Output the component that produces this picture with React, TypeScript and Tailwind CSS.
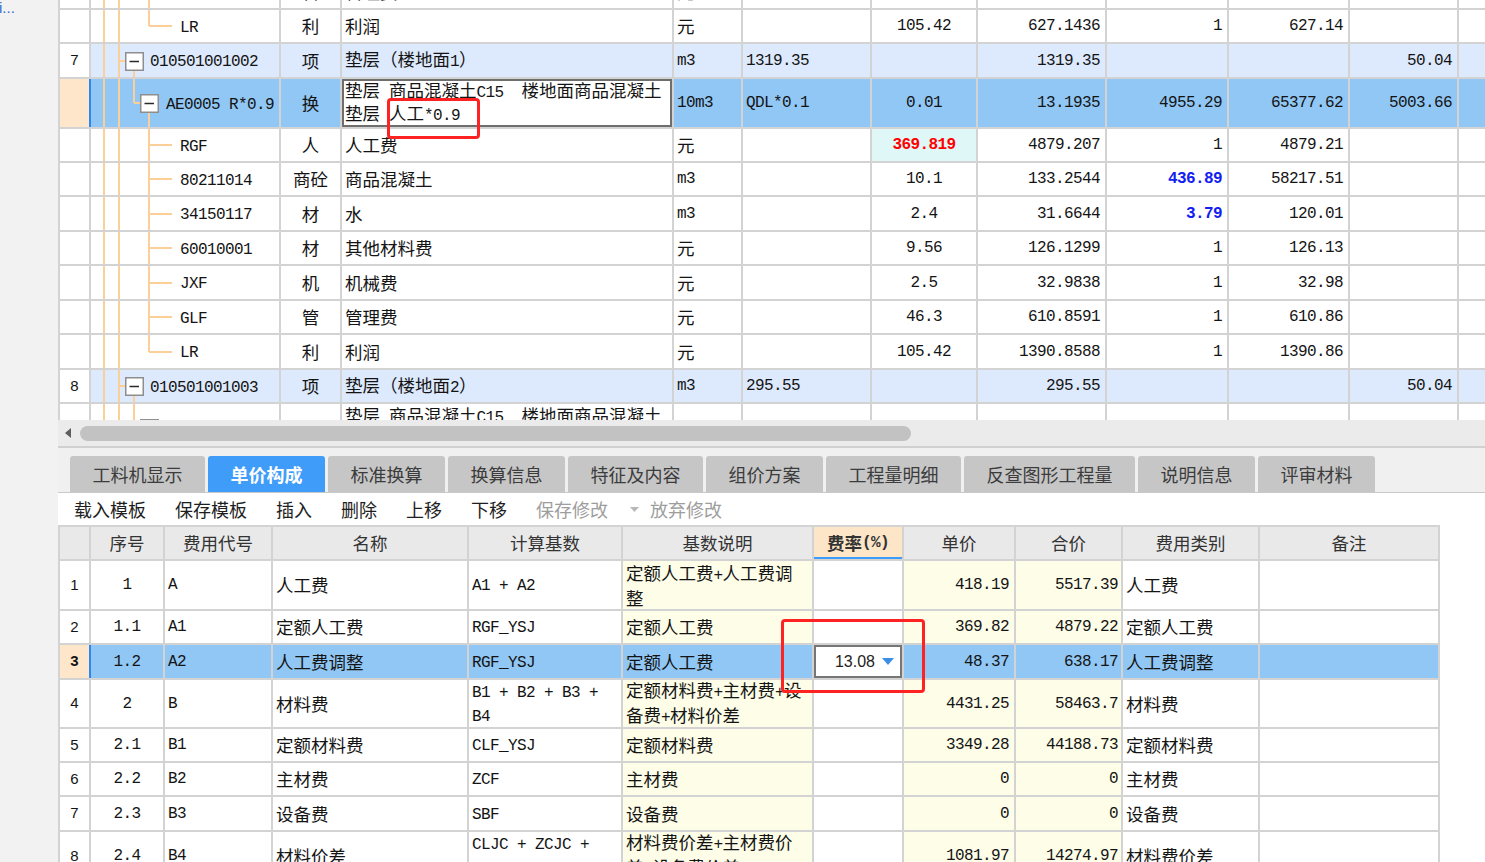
import React from "react";

const MONO = "font-['Liberation_Mono',monospace] text-[16px] tracking-[-0.6px]";
const CJKF = "font-['Noto_Sans_CJK_SC',sans-serif] text-[17.5px]";

function Mx({ s }: { s: string }) {
  const parts = s.match(/[\x00-\x7F]+|[^\x00-\x7F]+/g) ?? [];
  return (
    <>
      {parts.map((p, i) =>
        /^[\x00-\x7F]/.test(p) ? (
          <span key={i} className={MONO}>
            {p}
          </span>
        ) : (
          <span key={i} className={CJKF}>
            {p}
          </span>
        )
      )}
    </>
  );
}

function Lines({ lines }: { lines: string[] }) {
  return (
    <div>
      {lines.map((l, i) => (
        <div key={i}>
          <Mx s={l} />
        </div>
      ))}
    </div>
  );
}

type TreeKind = "leaf" | "leafLast" | "l1" | "l2";

const LINE = "#fcce98";

function Tree({ kind, h }: { kind: TreeKind; h: number }) {
  const m = Math.round(h / 2);
  return (
    <svg className="absolute left-0 top-0" width={90} height={h}>
      <g shapeRendering="crispEdges" stroke={LINE} strokeWidth={2}>
        <line x1={13} y1={0} x2={13} y2={h} />
        <line x1={28} y1={0} x2={28} y2={h} />
        {kind === "leaf" && (
          <>
            <line x1={58} y1={0} x2={58} y2={h} />
            <line x1={58} y1={m} x2={81} y2={m} />
          </>
        )}
        {kind === "leafLast" && (
          <>
            <line x1={58} y1={0} x2={58} y2={m} />
            <line x1={58} y1={m} x2={81} y2={m} />
          </>
        )}
        {kind === "l1" && (
          <>
            <line x1={28} y1={m} x2={34} y2={m} />
            <line x1={43} y1={m + 9} x2={43} y2={h} />
          </>
        )}
        {kind === "l2" && (
          <>
            <line x1={43} y1={0} x2={43} y2={m} />
            <line x1={43} y1={m} x2={49} y2={m} />
            <line x1={58} y1={m + 9} x2={58} y2={h} />
          </>
        )}
      </g>
      {kind === "l1" && (
        <>
          <rect x={34.75} y={m - 8.25} width={17.5} height={17.5} fill="#fff" stroke="#8e8e8e" strokeWidth={1.5} />
          <line x1={38.5} y1={m + 0.5} x2={48} y2={m + 0.5} stroke="#2a2a2a" strokeWidth={1.5} />
        </>
      )}
      {kind === "l2" && (
        <>
          <rect x={49.75} y={m - 8.25} width={17.5} height={17.5} fill="#fff" stroke="#8e8e8e" strokeWidth={1.5} />
          <line x1={53.5} y1={m + 0.5} x2={63} y2={m + 0.5} stroke="#2a2a2a" strokeWidth={1.5} />
        </>
      )}
    </svg>
  );
}

const padMap: Record<TreeKind, string> = {
  leaf: "pl-[89px]",
  leafLast: "pl-[89px]",
  l1: "pl-[59px]",
  l2: "pl-[75px]",
};

type TopRow = {
  hc: string;
  h: number;
  kind: TreeKind;
  bg?: "hdr" | "sel";
  num?: string;
  code: string;
  type: string;
  name: string[];
  unit: string;
  expr: string;
  qty: string;
  c8: string;
  c9: string;
  c10: string;
  c11: string;
  qtyRed?: boolean;
  c9Blue?: boolean;
  edit?: boolean;
  extra?: string;
};

const topRows: TopRow[] = [
  { hc: "h-[34px]", h: 34, extra: "-mt-[24px]", kind: "leaf", code: "GLF", type: "管", name: ["管理费"], unit: "元", expr: "", qty: "46.3", c8: "287.4432", c9: "1", c10: "287.44", c11: "" },
  { hc: "h-[34px]", h: 34, kind: "leafLast", code: "LR", type: "利", name: ["利润"], unit: "元", expr: "", qty: "105.42", c8: "627.1436", c9: "1", c10: "627.14", c11: "" },
  { hc: "h-[35px]", h: 35, kind: "l1", bg: "hdr", num: "7", code: "010501001002", type: "项", name: ["垫层（楼地面1）"], unit: "m3", expr: "1319.35", qty: "", c8: "1319.35", c9: "", c10: "", c11: "50.04" },
  { hc: "h-[50px]", h: 50, kind: "l2", bg: "sel", code: "AE0005 R*0.9", type: "换", name: ["垫层 商品混凝土C15  楼地面商品混凝土", "垫层 人工*0.9"], unit: "10m3", expr: "QDL*0.1", qty: "0.01", c8: "13.1935", c9: "4955.29", c10: "65377.62", c11: "5003.66", edit: true },
  { hc: "h-[34px]", h: 34, kind: "leaf", code: "RGF", type: "人", name: ["人工费"], unit: "元", expr: "", qty: "369.819", qtyRed: true, c8: "4879.207", c9: "1", c10: "4879.21", c11: "" },
  { hc: "h-[34px]", h: 34, kind: "leaf", code: "80211014", type: "商砼", name: ["商品混凝土"], unit: "m3", expr: "", qty: "10.1", c8: "133.2544", c9: "436.89", c9Blue: true, c10: "58217.51", c11: "" },
  { hc: "h-[35px]", h: 35, kind: "leaf", code: "34150117", type: "材", name: ["水"], unit: "m3", expr: "", qty: "2.4", c8: "31.6644", c9: "3.79", c9Blue: true, c10: "120.01", c11: "" },
  { hc: "h-[34px]", h: 34, kind: "leaf", code: "60010001", type: "材", name: ["其他材料费"], unit: "元", expr: "", qty: "9.56", c8: "126.1299", c9: "1", c10: "126.13", c11: "" },
  { hc: "h-[35px]", h: 35, kind: "leaf", code: "JXF", type: "机", name: ["机械费"], unit: "元", expr: "", qty: "2.5", c8: "32.9838", c9: "1", c10: "32.98", c11: "" },
  { hc: "h-[34px]", h: 34, kind: "leaf", code: "GLF", type: "管", name: ["管理费"], unit: "元", expr: "", qty: "46.3", c8: "610.8591", c9: "1", c10: "610.86", c11: "" },
  { hc: "h-[35px]", h: 35, kind: "leafLast", code: "LR", type: "利", name: ["利润"], unit: "元", expr: "", qty: "105.42", c8: "1390.8588", c9: "1", c10: "1390.86", c11: "" },
  { hc: "h-[34px]", h: 34, kind: "l1", bg: "hdr", num: "8", code: "010501001003", type: "项", name: ["垫层（楼地面2）"], unit: "m3", expr: "295.55", qty: "", c8: "295.55", c9: "", c10: "", c11: "50.04" },
  { hc: "h-[50px]", h: 50, kind: "l2", code: "AE0005 R*0.9", type: "换", name: ["垫层 商品混凝土C15  楼地面商品混凝土", "垫层 人工*0.9"], unit: "10m3", expr: "QDL*0.1", qty: "0.01", c8: "3.0", c9: "4955.29", c10: "14865.87", c11: "" },
];

const CELL = "shrink-0 border-r-2 border-[#d3d3d3] flex items-center whitespace-pre leading-[20px] overflow-hidden";

function TopGridRow({ r }: { r: TopRow }) {
  const sel = r.bg === "sel";
  const rowBg = sel ? "bg-[#91c7f5]" : r.bg === "hdr" ? "bg-[#dde9fc]" : "bg-white";
  return (
    <div className={`flex border-b-2 border-[#d3d3d3] ${r.hc} ${r.extra ?? ""} ${rowBg}`}>
      <div
        className={`flex w-[31px] shrink-0 items-center justify-center border-r-2 font-['Liberation_Sans',sans-serif] text-[15px] ${
          sel ? "border-[#2f86ee] bg-[#fde6c9]" : "border-[#d3d3d3] bg-white"
        }`}
      >
        {r.num}
      </div>
      <div className={`${CELL} relative w-[190px] ${padMap[r.kind]}`}>
        <Tree kind={r.kind} h={r.h - 2} />
        <span className="relative">
          <Mx s={r.code} />
        </span>
      </div>
      <div className={`${CELL} w-[61px] justify-center`}>
        <Mx s={r.type} />
      </div>
      <div className={`${CELL} w-[332px] pl-[3px] ${r.edit ? "bg-white shadow-[inset_0_0_0_2px_#6e6e6e]" : ""}`}>
        <Lines lines={r.name} />
      </div>
      <div className={`${CELL} w-[69px] pl-[3px]`}>
        <Mx s={r.unit} />
      </div>
      <div className={`${CELL} w-[129px] pl-[3px]`}>
        <Mx s={r.expr} />
      </div>
      <div className={`${CELL} w-[106px] justify-center ${r.qtyRed ? "bg-[#dff7f7]" : ""}`}>
        {r.qtyRed ? (
          <span className={`${MONO} font-bold text-[#ff0000]`}>{r.qty}</span>
        ) : (
          <Mx s={r.qty} />
        )}
      </div>
      <div className={`${CELL} w-[129px] justify-end pr-[5px]`}>
        <Mx s={r.c8} />
      </div>
      <div className={`${CELL} w-[122px] justify-end pr-[5px]`}>
        {r.c9Blue ? <span className={`${MONO} font-bold text-[#1220f2]`}>{r.c9}</span> : <Mx s={r.c9} />}
      </div>
      <div className={`${CELL} w-[121px] justify-end pr-[5px]`}>
        <Mx s={r.c10} />
      </div>
      <div className={`${CELL} w-[109px] justify-end pr-[5px]`}>
        <Mx s={r.c11} />
      </div>
      <div className="flex-1" />
    </div>
  );
}

const tabs: { label: string; w: string; active?: boolean }[] = [
  { label: "工料机显示", w: "w-[135px]" },
  { label: "单价构成", w: "w-[117px]", active: true },
  { label: "标准换算", w: "w-[117px]" },
  { label: "换算信息", w: "w-[117px]" },
  { label: "特征及内容", w: "w-[135px]" },
  { label: "组价方案", w: "w-[117px]" },
  { label: "工程量明细", w: "w-[135px]" },
  { label: "反查图形工程量", w: "w-[171px]" },
  { label: "说明信息", w: "w-[117px]" },
  { label: "评审材料", w: "w-[117px]" },
];

type BRow = {
  hc: string;
  n: string;
  seq: string;
  code: string;
  name: string;
  base: string[];
  desc: string[];
  price: string;
  total: string;
  cat: string;
  sel?: boolean;
};

const bRows: BRow[] = [
  { hc: "h-[50px]", n: "1", seq: "1", code: "A", name: "人工费", base: ["A1 + A2"], desc: ["定额人工费+人工费调", "整"], price: "418.19", total: "5517.39", cat: "人工费" },
  { hc: "h-[34px]", n: "2", seq: "1.1", code: "A1", name: "定额人工费", base: ["RGF_YSJ"], desc: ["定额人工费"], price: "369.82", total: "4879.22", cat: "定额人工费" },
  { hc: "h-[35px]", n: "3", seq: "1.2", code: "A2", name: "人工费调整", base: ["RGF_YSJ"], desc: ["定额人工费"], price: "48.37", total: "638.17", cat: "人工费调整", sel: true },
  { hc: "h-[49px]", n: "4", seq: "2", code: "B", name: "材料费", base: ["B1 + B2 + B3 +", "B4"], desc: ["定额材料费+主材费+设", "备费+材料价差"], price: "4431.25", total: "58463.7", cat: "材料费" },
  { hc: "h-[34px]", n: "5", seq: "2.1", code: "B1", name: "定额材料费", base: ["CLF_YSJ"], desc: ["定额材料费"], price: "3349.28", total: "44188.73", cat: "定额材料费" },
  { hc: "h-[34px]", n: "6", seq: "2.2", code: "B2", name: "主材费", base: ["ZCF"], desc: ["主材费"], price: "0", total: "0", cat: "主材费" },
  { hc: "h-[35px]", n: "7", seq: "2.3", code: "B3", name: "设备费", base: ["SBF"], desc: ["设备费"], price: "0", total: "0", cat: "设备费" },
  { hc: "h-[50px]", n: "8", seq: "2.4", code: "B4", name: "材料价差", base: ["CLJC + ZCJC +", "SBJC"], desc: ["材料费价差+主材费价", "差+设备费价差"], price: "1081.97", total: "14274.97", cat: "材料费价差" },
];

function BottomRow({ r }: { r: BRow }) {
  const sel = !!r.sel;
  const yel = sel ? "" : "bg-[#fdfde8]";
  return (
    <div className={`flex border-b-2 border-[#d3d3d3] ${r.hc} ${sel ? "bg-[#91c7f5]" : "bg-white"}`}>
      <div
        className={`flex w-[31px] shrink-0 items-center justify-center border-r-2 font-['Liberation_Sans',sans-serif] text-[15px] ${
          sel ? "border-[#2f86ee] bg-[#fde6c9] font-bold" : "border-[#d3d3d3] bg-white"
        }`}
      >
        {r.n}
      </div>
      <div className={`${CELL} w-[74px] justify-center`}>
        <Mx s={r.seq} />
      </div>
      <div className={`${CELL} w-[108px] pl-[3px]`}>
        <Mx s={r.code} />
      </div>
      <div className={`${CELL} w-[196px] pl-[3px]`}>
        <Mx s={r.name} />
      </div>
      <div className={`${CELL} w-[154px] pl-[3px] leading-[21px]`}>
        <Lines lines={r.base} />
      </div>
      <div className={`${CELL} w-[191px] pl-[3px] leading-[21px] ${yel}`}>
        <Lines lines={r.desc} />
      </div>
      <div className={`${CELL} w-[90px]`}>
        {sel && (
          <div className="flex h-full w-full items-center justify-end gap-[7px] bg-white pr-[8px] shadow-[inset_0_0_0_2px_#767676]">
            <span className="font-['Liberation_Sans',sans-serif] text-[16px] text-[#222]">13.08</span>
            <svg width="12" height="7" viewBox="0 0 12 7">
              <path d="M0 0H12L6 7Z" fill="#3a8ee6" />
            </svg>
          </div>
        )}
      </div>
      <div className={`${CELL} w-[112px] justify-end pr-[5px] ${yel}`}>
        <Mx s={r.price} />
      </div>
      <div className={`${CELL} w-[107px] justify-end pr-[3px] ${yel}`}>
        <Mx s={r.total} />
      </div>
      <div className={`${CELL} w-[137px] pl-[3px]`}>
        <Mx s={r.cat} />
      </div>
      <div className={`${CELL} w-[180px]`} />
    </div>
  );
}

const headers: { label: string; w: string; hl?: boolean }[] = [
  { label: "序号", w: "w-[74px]" },
  { label: "费用代号", w: "w-[108px]" },
  { label: "名称", w: "w-[196px]" },
  { label: "计算基数", w: "w-[154px]" },
  { label: "基数说明", w: "w-[191px]" },
  { label: "费率(%)", w: "w-[90px]", hl: true },
  { label: "单价", w: "w-[112px]" },
  { label: "合价", w: "w-[107px]" },
  { label: "费用类别", w: "w-[137px]" },
  { label: "备注", w: "w-[180px]" },
];

export default function App() {
  return (
    <div className="relative flex h-[862px] w-[1485px] overflow-hidden bg-[#f2f2f2] font-['Noto_Sans_CJK_SC',sans-serif] text-[#141414]">
      <aside className="w-[58px] shrink-0 overflow-hidden bg-[#f2f2f2]">
        <div className="-ml-[1px] font-['Liberation_Sans',sans-serif] text-[15px] leading-none text-[#2f6fd0]">i...</div>
      </aside>
      <main className="flex min-w-0 flex-1 flex-col">
        {/* top grid */}
        <div className="h-[420px] shrink-0 overflow-hidden border-l-2 border-[#d3d3d3] bg-white">
          {topRows.map((r, i) => (
            <TopGridRow key={i} r={r} />
          ))}
        </div>

        {/* horizontal scrollbar */}
        <div className="flex h-[28px] shrink-0 items-center border-b-2 border-[#d0d0d0] bg-[#ebebeb]">
          <svg className="ml-[6px]" width="8" height="10" viewBox="0 0 8 10">
            <path d="M7 0L1 5L7 10Z" fill="#5e5e5e" />
          </svg>
          <div className="ml-[8px] h-[15px] w-[831px] rounded-full bg-[#c2c2c2]" />
        </div>

        {/* tabs */}
        <div className="flex h-[45px] shrink-0 gap-[3px] border-b border-[#c9c9c9] bg-[#f0f0f0] pl-[12px] pt-[8px]">
          {tabs.map((t) => (
            <div
              key={t.label}
              className={`${t.w} flex h-[36px] items-center justify-center rounded-t-[3px] text-[18px] ${
                t.active ? "bg-[#3f9cf9] font-bold text-white" : "bg-[#c6c6c6] text-[#3c3c3c]"
              }`}
            >
              {t.label}
            </div>
          ))}
        </div>

        {/* toolbar */}
        <div className="flex h-[32px] shrink-0 items-center bg-white pl-[16px] text-[18px] leading-none text-[#1e1e1e]">
          <span>载入模板</span>
          <span className="ml-[29px]">保存模板</span>
          <span className="ml-[29px]">插入</span>
          <span className="ml-[29px]">删除</span>
          <span className="ml-[29px]">上移</span>
          <span className="ml-[29px]">下移</span>
          <span className="ml-[29px] text-[#9d9d9d]">保存修改</span>
          <svg className="ml-[22px]" width="9" height="5" viewBox="0 0 9 5">
            <path d="M0 0H9L4.5 5Z" fill="#b8b8b8" />
          </svg>
          <span className="ml-[11px] text-[#9d9d9d]">放弃修改</span>
        </div>

        {/* bottom grid */}
        <div className="flex-1 bg-white">
          <div className="w-[1382px] border-l-2 border-t-2 border-[#d3d3d3]">
            <div className="flex h-[34px] border-b-2 border-[#d3d3d3] bg-[#e9e9e9]">
              <div className="w-[31px] shrink-0 border-r-2 border-[#d3d3d3]" />
              {headers.map((h) => (
                <div
                  key={h.label}
                  className={`${CELL} ${h.w} justify-center text-[#333] ${
                    h.hl ? "bg-[#fde6c8] font-bold shadow-[inset_0_-2px_0_#3d9bf9]" : ""
                  }`}
                >
                  <Mx s={h.label} />
                </div>
              ))}
            </div>
            {bRows.map((r) => (
              <BottomRow key={r.n} r={r} />
            ))}
          </div>
        </div>
      </main>

      {/* annotation rectangles */}
      <div className="pointer-events-none absolute left-[387px] top-[98px] h-[41px] w-[93px] rounded-[4px] border-[3px] border-[#ff2222]" />
      <div className="pointer-events-none absolute left-[781px] top-[619px] h-[74px] w-[144px] rounded-[4px] border-[3px] border-[#ff2222]" />
    </div>
  );
}
